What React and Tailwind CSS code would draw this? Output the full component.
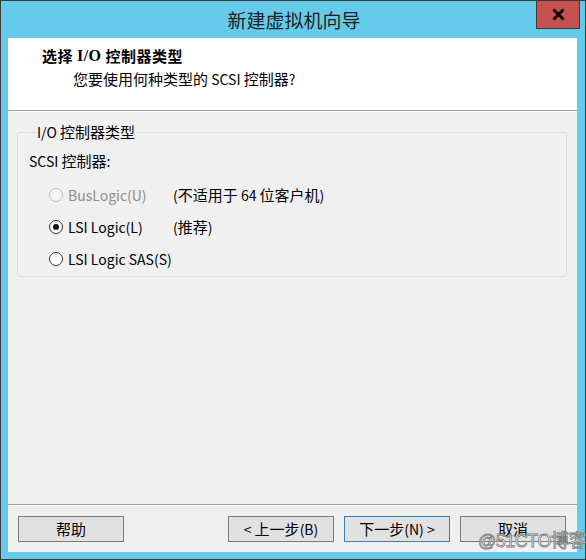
import React from "react";

const font = { fontFamily: '"Noto Sans CJK SC", "Liberation Sans", sans-serif' };

function T({ children }) {
  const parts = String(children).split(/([\u3000-\u9fff\uff00-\uffef]+)/);
  return (
    <>
      {parts.map((p, i) =>
        p === "" ? null : /[\u3000-\u9fff\uff00-\uffef]/.test(p) ? (
          <span key={i} className="text-[15px]">{p}</span>
        ) : (
          <span key={i} className="text-[14px] whitespace-pre">{p}</span>
        )
      )}
    </>
  );
}

function Radio({ checked, disabled }) {
  return (
    <span
      className={
        "w-[14px] h-[14px] rounded-full border flex items-center justify-center shrink-0 " +
        (disabled ? "border-[#bcbcbc] bg-[#f4f4f4]" : "border-[#333333] bg-white")
      }
    >
      {checked && <span className="w-[6px] h-[6px] rounded-full bg-[#111111]" />}
    </span>
  );
}

function Btn({ children, primary }) {
  return (
    <div
      className={
        "w-[106px] h-[26px] flex items-center justify-center bg-[#e1e1e1] border text-black " +
        (primary ? "border-[#3c7fb1]" : "border-[#7a7a7a]")
      }
    >
      <span className="whitespace-nowrap">
        <T>{children}</T>
      </span>
    </div>
  );
}

export default function App() {
  return (
    <div
      className="relative w-[586px] h-[560px] border border-[#3a3a3a] bg-[#66caea] flex flex-col select-none text-[14px] leading-[18px]"
      style={font}
    >
      <div className="h-[37px] flex items-center justify-center text-[19px] text-[#1e1e1e] pl-[2px] pt-[1px]">
        新建虚拟机向导
      </div>
      <div className="absolute top-0 left-[535px] w-[44px] h-[28px] bg-[#c75050] border border-[#3a3a3a] border-t-0 flex items-center justify-center">
        <svg width="13" height="13" viewBox="0 0 13 13">
          <path d="M1.5 1.5 L11.5 11.5 M11.5 1.5 L1.5 11.5" stroke="#000" strokeWidth="2.8" strokeLinecap="butt" />
        </svg>
      </div>
      <div className="flex-1 ml-[7px] mr-[8px] mb-[7px] bg-[#f0f0f0] flex flex-col">
        <div className="h-[72px] bg-white pl-[34px] pt-[8px]">
          <div className="h-[20px] flex items-center text-[15px] font-bold text-black tracking-[0.5px] whitespace-pre">
            <span>选择 </span>
            <span style={{ fontFamily: '"Liberation Serif", serif' }} className="text-[16px]">I/O</span>
            <span> 控制器类型</span>
          </div>
          <div className="h-[18px] mt-[4px] pl-[31px] flex items-center text-black whitespace-nowrap">
            <span><T>您要使用何种类型的 SCSI 控制器?</T></span>
          </div>
        </div>
        <div className="h-px bg-[#a0a0a0]" />
        <div className="h-px bg-white" />
        <fieldset className="mt-[12px] ml-[9px] mr-[10px] border border-[#d5dfe5] rounded-[3px] pl-[11px] pb-[1px]">
          <legend className="ml-[7px] px-[1px] text-black whitespace-nowrap">
            <span className="h-[16px] flex items-center">
              <span><T>I/O 控制器类型</T></span>
            </span>
          </legend>
          <div className="mt-[13px] h-[16px] flex items-center text-black whitespace-nowrap">
            <span><T>SCSI 控制器:</T></span>
          </div>
          <div className="mt-[10px] ml-[20px] grid grid-cols-[124px_1fr]">
            <div className="h-[32px] flex items-center gap-[5px] text-[#8d8d8d]">
              <Radio disabled />
              <span className="whitespace-nowrap"><T>BusLogic(U)</T></span>
            </div>
            <div className="h-[32px] flex items-center text-black whitespace-nowrap">
              <span><T>(不适用于 64 位客户机)</T></span>
            </div>
            <div className="h-[32px] flex items-center gap-[5px] text-black">
              <Radio checked />
              <span className="whitespace-nowrap"><T>LSI Logic(L)</T></span>
            </div>
            <div className="h-[32px] flex items-center text-black whitespace-nowrap">
              <span><T>(推荐)</T></span>
            </div>
            <div className="h-[32px] flex items-center gap-[5px] text-black whitespace-nowrap">
              <Radio />
              <span><T>LSI Logic SAS(S)</T></span>
            </div>
            <div className="h-[32px]" />
          </div>
        </fieldset>
        <div className="flex-1" />
        <div className="h-px bg-[#a0a0a0]" />
        <div className="h-px bg-white" />
        <div className="flex items-center pt-[10px] pb-[10px] pl-[10px] pr-[11px]">
          <Btn>帮助</Btn>
          <div className="flex-1" />
          <div className="flex gap-[10px]">
            <Btn>{"< 上一步(B)"}</Btn>
            <Btn primary>{"下一步(N) >"}</Btn>
            <Btn>取消</Btn>
          </div>
        </div>
      </div>
      <div
        className="absolute left-[477px] top-[528px] whitespace-nowrap text-[18px] leading-[24px] text-[#f6f6f6] [-webkit-text-stroke:0.8px_#7c7c7c] tracking-[-0.5px]"
        style={{ fontFamily: '"Liberation Sans", "Noto Sans CJK SC", sans-serif' }}
      >
        @51CTO博客
      </div>
    </div>
  );
}
